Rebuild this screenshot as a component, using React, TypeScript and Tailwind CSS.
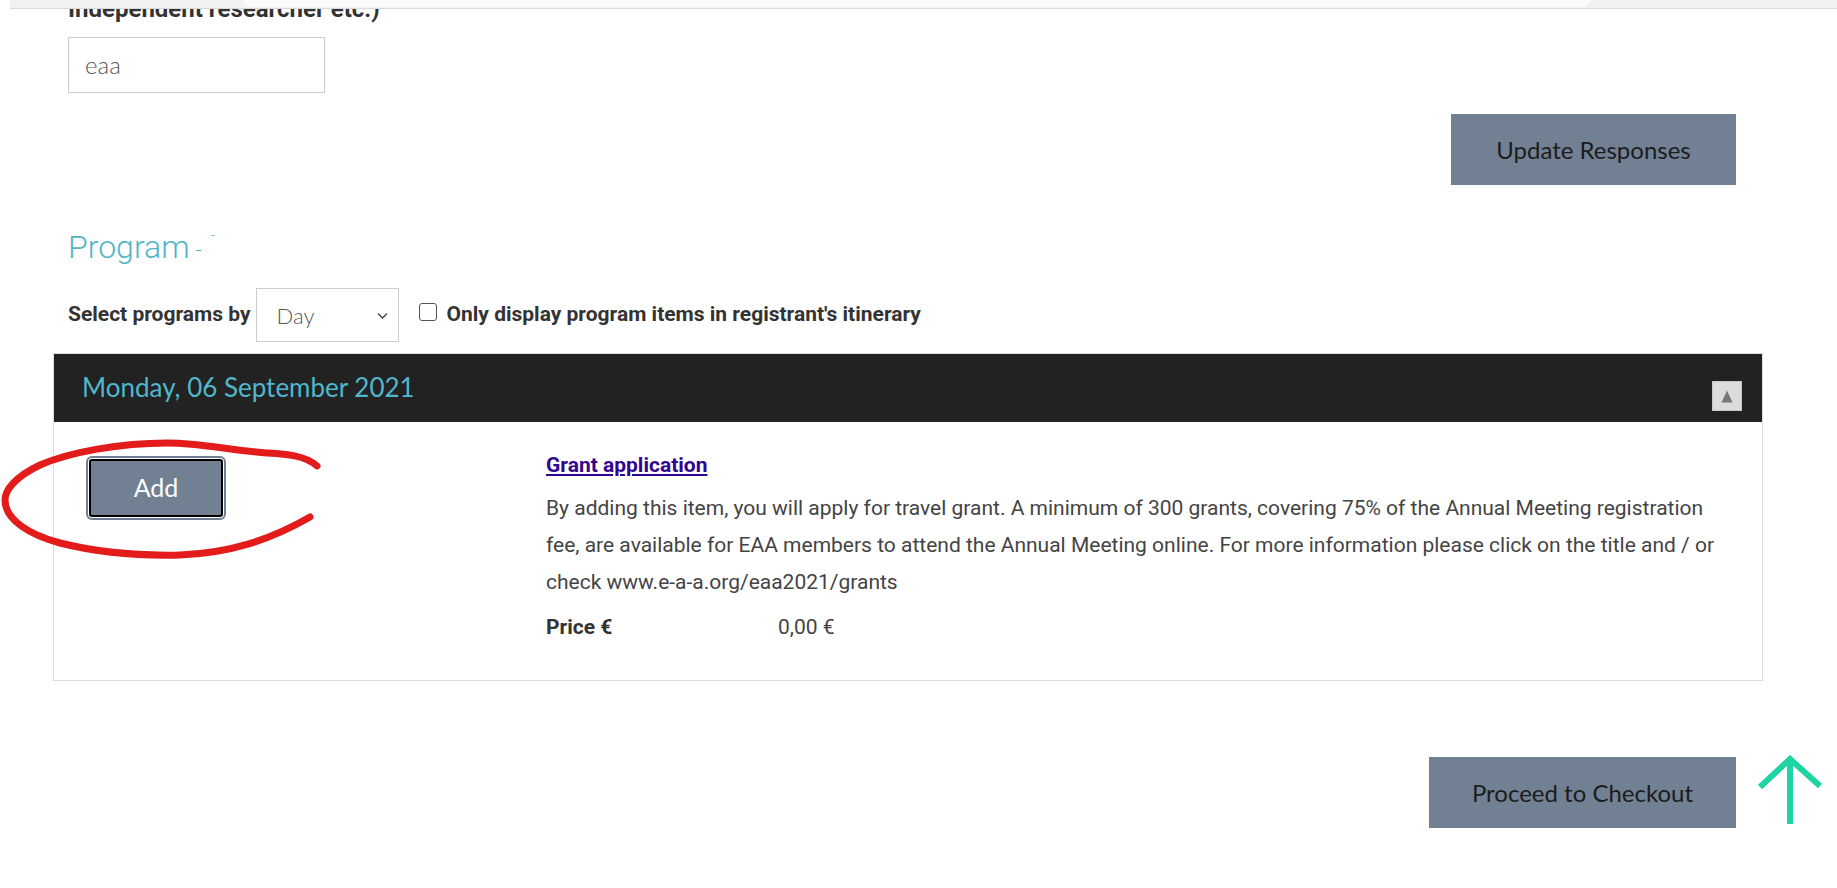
import React from "react";

export default function App() {
  return (
    <div className="relative w-[1837px] min-h-[888px] overflow-hidden bg-white font-['Roboto',sans-serif] text-[#444]">
      {/* page content */}
      <div className="w-[1763px] pl-[53px]">
        <div className="pl-[15px]">
          <div className="mt-[-6px] h-[30px] text-[24px] font-bold leading-[30px] text-[#333]">
            Independent researcher etc.)
          </div>
          <div className="mt-[13px] flex h-[56px] w-[257px] items-center border border-[#cccccc] pl-[16px] font-['Lato',sans-serif] text-[24px] font-light text-[#555]">
            eaa
          </div>
        </div>

        <div className="mt-[21px] flex justify-end pr-[27px]">
          <button className="h-[71px] w-[285px] bg-[#718092] font-['Lato',sans-serif] text-[24px] text-[#1c1c1c]">
            Update Responses
          </button>
        </div>

        <div className="mt-[42px] pl-[15px]">
          <h2 className="flex items-baseline h-[40px] text-[32px] font-light leading-[40px] text-[#52b5c6]">
            <span>Program</span>
            <span className="ml-[6px] text-[22px]">-</span>
            <span className="ml-[8px] relative top-[-14px] text-[13px]">ˉ</span>
          </h2>
        </div>

        <div className="mt-[21px] flex items-center pl-[15px]">
          <span className="text-[21px] font-bold text-[#333]">Select programs by</span>
          <div className="ml-[5px] flex h-[54px] w-[143px] items-center justify-between border border-[#cccccc] pl-[20px] pr-[10px] font-['Lato',sans-serif] text-[22px] font-light text-[#555]">
            <span>Day</span>
            <svg width="11" height="8" viewBox="0 0 11 8" className="mt-[2px]">
              <polyline points="1,1.5 5.5,6 10,1.5" fill="none" stroke="#444" strokeWidth="1.4" />
            </svg>
          </div>
          <span className="ml-[20px] mt-[-6px] h-[18px] w-[18px] rounded-[3px] border border-[#555] bg-white" />
          <span className="ml-[10px] text-[21px] font-bold text-[#333]">
            Only display program items in registrant's itinerary
          </span>
        </div>

        {/* day panel */}
        <div className="mt-[11px] w-[1710px] border border-[#dddddd]">
          <div className="flex h-[68px] items-start justify-between bg-[#222222] pl-[28px] pr-[20px]">
            <span className="pt-[16px] font-['Lato',sans-serif] text-[26px] leading-[34px] text-[#4fb8cd]">
              Monday, 06 September 2021
            </span>
            <button className="mt-[27px] flex h-[30px] w-[30px] items-center justify-center border border-[#c8c8c8] bg-[#dcdcdc]">
              <svg width="12" height="13" viewBox="0 0 12 13">
                <polygon points="6,0.5 11.5,12.5 0.5,12.5" fill="#777" />
              </svg>
            </button>
          </div>
          <div className="flex h-[258px]">
            <div className="w-[492px] pl-[35px] pt-[37px]">
              <button className="h-[58px] w-[134px] rounded-[3px] border-2 border-black bg-[#718092] font-['Lato',sans-serif] text-[25px] text-white shadow-[0_0_0_1px_#ffffff,0_0_0_3px_#718092]">
                Add
              </button>
            </div>
            <div className="w-[1180px] pt-[31px]">
              <a className="text-[21px] font-bold leading-[24px] text-[#33068f] underline underline-offset-[2px]">
                Grant application
              </a>
              <p className="mt-[11px] text-[21px] leading-[37px] text-[#444]">
                By adding this item, you will apply for travel grant. A minimum of 300 grants, covering 75% of the Annual Meeting registration fee, are available for EAA members to attend the Annual Meeting online. For more information please click on the title and / or check www.e-a-a.org/eaa2021/grants
              </p>
              <div className="mt-[8px] flex text-[21px] leading-[37px]">
                <span className="w-[232px] font-bold text-[#333]">Price €</span>
                <span>0,00 €</span>
              </div>
            </div>
          </div>
        </div>

        <div className="mt-[76px] flex justify-end pr-[27px]">
          <button className="h-[71px] w-[307px] bg-[#718092] font-['Lato',sans-serif] text-[24px] text-[#1c1c1c]">
            Proceed to Checkout
          </button>
        </div>
      </div>

      {/* top browser strip overlay */}
      <div className="absolute left-[10px] right-0 top-0 h-[9px] border-b border-[#d9d9d9] bg-[#f1f1f1]">
        <div className="absolute left-[233px] top-0 h-[7px] w-[1347px] rounded-b-[8px] bg-[#fbfbfb]" />
      </div>

      {/* red annotation */}
      <svg className="pointer-events-none absolute left-0 top-0" width="400" height="600" viewBox="0 0 400 600">
        <path
          d="M317 466 C305 455 285 454 267 453 C230 450 200 443 167 443 C120 443 70 452 40 465 C15 477 5 490 5 500 C5 520 30 535 60 543 C100 553 140 556 180 555 C230 553 270 540 310 517"
          fill="none"
          stroke="#e31b1b"
          strokeWidth="7"
          strokeLinecap="round"
        />
      </svg>

      {/* back to top arrow */}
      <svg className="absolute left-[1752px] top-[755px]" width="75" height="75" viewBox="0 0 75 75">
        <polyline points="8,32 38,4 68,31" fill="none" stroke="#1ed4a2" strokeWidth="6" />
        <line x1="38" y1="5" x2="38" y2="69" stroke="#1ed4a2" strokeWidth="6" />
      </svg>
    </div>
  );
}
